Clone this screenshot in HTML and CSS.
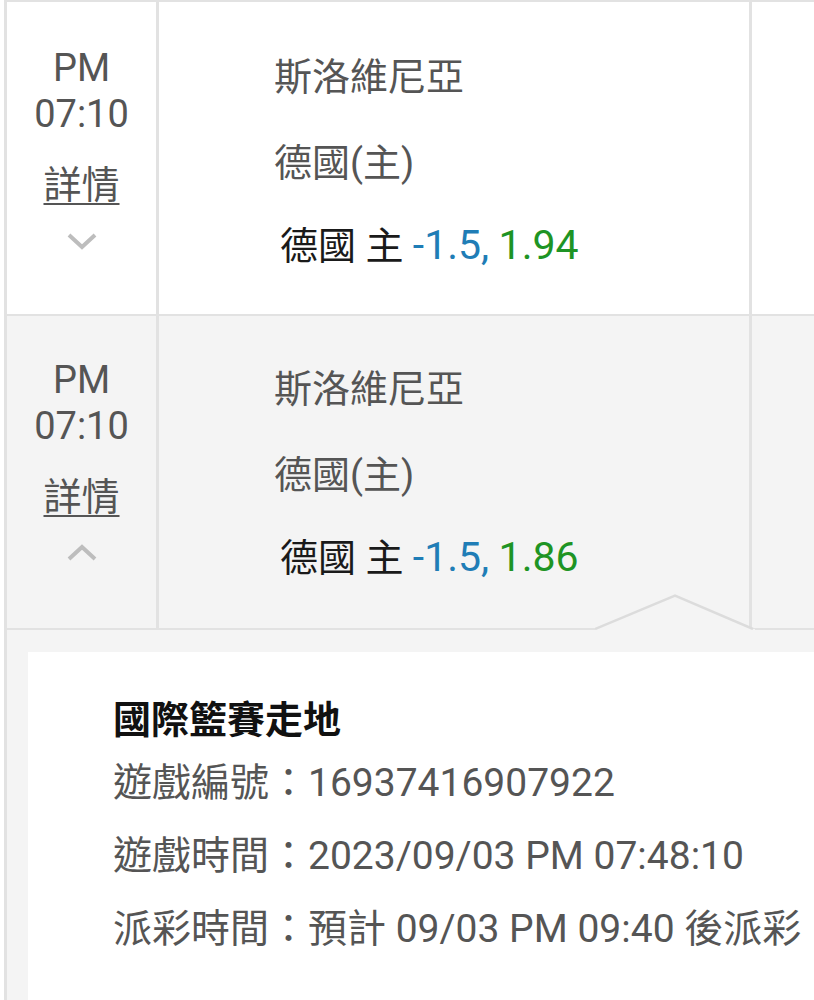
FILE: index.html
```html
<!DOCTYPE html>
<html lang="zh-Hant">
<head>
<meta charset="utf-8">
<title>注單</title>
<link rel="stylesheet" href="styles.css">
</head>
<body>
<div class="board">
  <div class="row">
    <div class="c-time">
      <div class="time">PM<br>07:10</div>
      <a class="detail-link">詳情</a>
      <svg class="chev" width="32" height="18" viewBox="0 0 32 18"><polyline points="3,3 16,15 29,3" fill="none" stroke="#bdbdbd" stroke-width="4"/></svg>
    </div>
    <div class="c-match">
      <div class="team">斯洛維尼亞</div>
      <div class="team team2">德國(主)</div>
      <div class="bet">德國 主 <span class="hdp">-1.5,</span> <span class="odds">1.94</span></div>
    </div>
    <div class="c-extra"></div>
  </div>
  <div class="row open">
    <div class="c-time">
      <div class="time">PM<br>07:10</div>
      <a class="detail-link">詳情</a>
      <svg class="chev" width="32" height="18" viewBox="0 0 32 18"><polyline points="3,15 16,3 29,15" fill="none" stroke="#bdbdbd" stroke-width="4"/></svg>
    </div>
    <div class="c-match">
      <div class="team">斯洛維尼亞</div>
      <div class="team team2">德國(主)</div>
      <div class="bet">德國 主 <span class="hdp">-1.5,</span> <span class="odds">1.86</span></div>
    </div>
    <div class="c-extra"></div>
    <svg class="notch" width="160" height="36" viewBox="0 0 160 36"><path d="M0,36 L0,35 L80,1.5 L158,35 L160,35 L160,36 Z" fill="#f4f4f4"/><polyline points="0,35 80,1.5 158,35" fill="none" stroke="#dcdcdc" stroke-width="2.5"/></svg>
  </div>
  <div class="detail-wrap">
    <div class="detail">
      <div class="d-title">國際籃賽走地</div>
      <div class="d-line">遊戲編號：16937416907922</div>
      <div class="d-line">遊戲時間：2023/09/03 PM 07:48:10</div>
      <div class="d-line">派彩時間：預計 09/03 PM 09:40 後派彩</div>
    </div>
  </div>
</div>
</body>
</html>
```
FILE: styles.css
```css
html, body {
  margin: 0;
  padding: 0;
  background: #ffffff;
}
body {
  font-family: Roboto, "Noto Sans CJK TC", "Noto Sans", sans-serif;
  color: #555555;
  height: 1000px;
  overflow: hidden;
}
.board {
  margin-left: 4px;
  border-left: 3px solid #e2e2e2;
  border-top: 2px solid #e2e2e2;
  height: 1000px;
  display: flex;
  flex-direction: column;
}
.row {
  position: relative;
  display: flex;
  height: 312px;
  border-bottom: 2px solid #e2e2e2;
  background: #ffffff;
}
.row.open {
  background: #f4f4f4;
}
.c-time {
  flex: 0 0 152px;
  border-right: 3px solid #e2e2e2;
  display: flex;
  flex-direction: column;
  align-items: center;
  padding-top: 43px;
  box-sizing: border-box;
}
.row.open .c-time {
  padding-top: 41px;
}
.time {
  font-size: 38px;
  line-height: 46px;
  text-align: center;
  color: #555555;
}
.detail-link {
  margin-top: 25px;
  font-size: 38px;
  line-height: 46px;
  color: #555555;
  text-decoration: underline;
  text-decoration-thickness: 2px;
  text-underline-offset: 5px;
}
.chev {
  margin-top: 24px;
  display: block;
}
.c-match {
  flex: 0 0 593px;
  box-sizing: border-box;
  border-right: 3px solid #e2e2e2;
  padding-left: 115px;
  padding-top: 52px;
}
.row.open .c-match {
  padding-top: 50px;
}
.team {
  font-size: 38px;
  line-height: 46px;
  color: #555555;
}
.team2 {
  margin-top: 40px;
}
.bet {
  margin-top: 36px;
  padding-left: 6px;
  font-size: 38px;
  line-height: 46px;
  color: #1a1a1a;
  white-space: nowrap;
}
.hdp {
  font-size: 41px;
  color: #1f7db6;
}
.odds {
  font-size: 41px;
  color: #1e9424;
}
.c-extra {
  flex: 1 1 auto;
}
.notch {
  position: absolute;
  left: 588px;
  bottom: -2px;
  display: block;
}
.detail-wrap {
  flex: 1;
  background: #f4f4f4;
  padding-top: 22px;
  padding-left: 21px;
  display: flex;
}
.detail {
  flex: 1;
  background: #ffffff;
  padding-top: 45px;
  padding-left: 85px;
}
.d-title {
  font-size: 38px;
  line-height: 46px;
  font-weight: 700;
  color: #111111;
  margin-bottom: 4px;
}
.d-line {
  font-size: 39px;
  line-height: 73px;
  color: #555555;
  white-space: nowrap;
}
```
